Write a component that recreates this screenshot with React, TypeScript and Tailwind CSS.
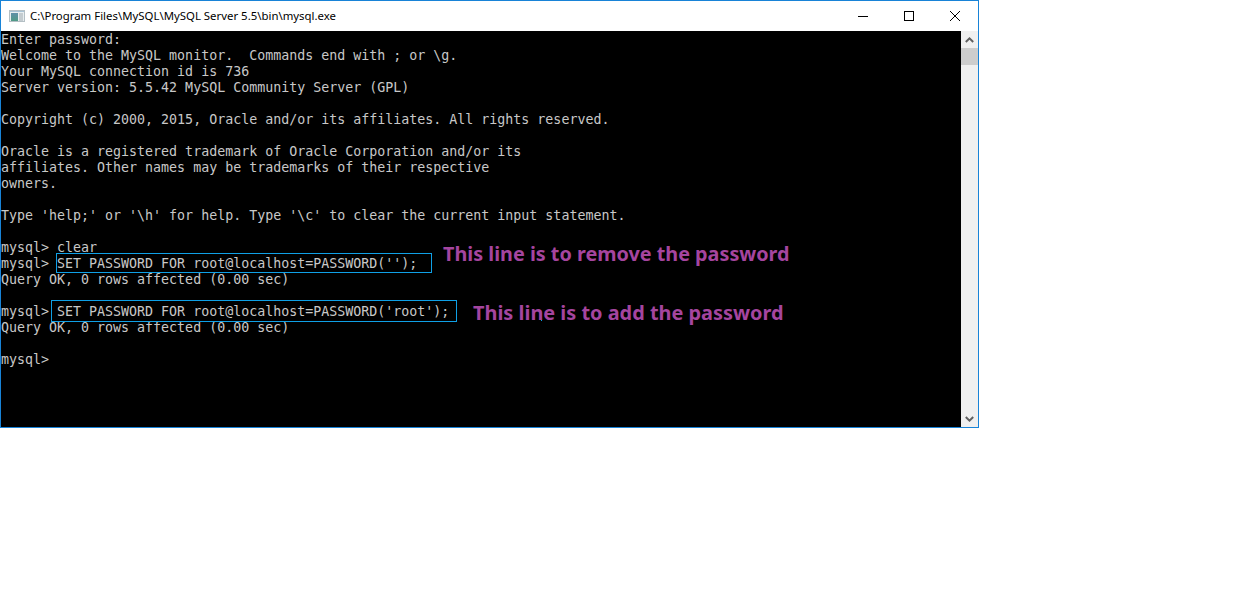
const lines = [
  'Enter password:',
  'Welcome to the MySQL monitor.  Commands end with ; or \\g.',
  'Your MySQL connection id is 736',
  'Server version: 5.5.42 MySQL Community Server (GPL)',
  '',
  'Copyright (c) 2000, 2015, Oracle and/or its affiliates. All rights reserved.',
  '',
  'Oracle is a registered trademark of Oracle Corporation and/or its',
  'affiliates. Other names may be trademarks of their respective',
  'owners.',
  '',
  "Type 'help;' or '\\h' for help. Type '\\c' to clear the current input statement.",
  '',
  'mysql> clear',
  "mysql> SET PASSWORD FOR root@localhost=PASSWORD('');",
  'Query OK, 0 rows affected (0.00 sec)',
  '',
  "mysql> SET PASSWORD FOR root@localhost=PASSWORD('root');",
  'Query OK, 0 rows affected (0.00 sec)',
  '',
  'mysql>',
];

function ConsoleIcon() {
  return (
    <svg width="16" height="12" viewBox="0 0 16 12" className="shrink-0">
      <defs>
        <linearGradient id="panel" x1="0" y1="0" x2="0" y2="1">
          <stop offset="0" stopColor="#5f8fa8" />
          <stop offset="1" stopColor="#4f9a86" />
        </linearGradient>
      </defs>
      <rect x="0.5" y="0.5" width="15" height="11" fill="#e8eef0" stroke="#b4bfc4" />
      <rect x="1" y="1" width="14" height="1" fill="#a9c3d6" />
      <rect x="2" y="3" width="7" height="8" fill="url(#panel)" />
      <rect x="10" y="3" width="4" height="8" fill="#c4ccd0" />
    </svg>
  );
}

export default function App() {
  return (
    <div className="w-[1233px] h-[604px] bg-white overflow-hidden">
      <div className="w-[979px] h-[428px] border border-[#1883d7] flex flex-col">
        {/* Title bar */}
        <div className="h-[30px] bg-white flex items-center shrink-0">
          <div className="ml-2 mr-[5px] flex items-center">
            <ConsoleIcon />
          </div>
          <span className="text-[11.4px] text-black font-['Noto_Sans',sans-serif] whitespace-nowrap">
            C:\Program Files\MySQL\MySQL Server 5.5\bin\mysql.exe
          </span>
          <div className="ml-auto flex items-center h-full">
            <div className="w-[46px] flex justify-center">
              <svg width="10" height="10" viewBox="0 0 10 10">
                <path d="M0 5.5H10" stroke="#000" strokeWidth="1" />
              </svg>
            </div>
            <div className="w-[46px] flex justify-center">
              <svg width="10" height="10" viewBox="0 0 10 10">
                <rect x="0.5" y="0.5" width="9" height="9" fill="none" stroke="#000" strokeWidth="1" />
              </svg>
            </div>
            <div className="w-[46px] flex justify-center">
              <svg width="10" height="10" viewBox="0 0 10 10">
                <path d="M0 0L10 10M10 0L0 10" stroke="#000" strokeWidth="1" />
              </svg>
            </div>
          </div>
        </div>

        {/* Console */}
        <div className="flex flex-1 min-h-0">
          <div className="relative flex-1 bg-black overflow-hidden">
            <pre className="pt-[1px] font-['DejaVu_Sans_Mono',monospace] text-[13.3px] leading-[16px] text-[#c8c8c8]">
              {lines.map((l, i) => (
                <div key={i} className="h-[16px]">{l}</div>
              ))}
            </pre>

            {/* Annotations */}
            <div className="absolute left-[55px] top-[222px] w-[376px] h-[20px] border border-[#0fa0e6]" />
            <div className="absolute left-[50px] top-[269px] w-[406px] h-[22px] border border-[#0fa0e6]" />
            <span className="absolute left-[442px] top-[208px] text-[19.8px] leading-[30px] font-bold text-[#a5459f] font-['Noto_Sans',sans-serif] whitespace-nowrap">
              This line is to remove the password
            </span>
            <span className="absolute left-[472px] top-[267px] text-[19.9px] leading-[30px] font-bold text-[#a5459f] font-['Noto_Sans',sans-serif] whitespace-nowrap">
              This line is to add the password
            </span>
            <div className="absolute left-[540px] top-[289px] w-px h-px bg-[#0fa0e6]" />
          </div>

          {/* Scrollbar */}
          <div className="w-[17px] bg-[#f0f0f0] flex flex-col shrink-0">
            <div className="h-[17px] flex items-center justify-center">
              <svg width="9" height="6" viewBox="0 0 9 6">
                <path d="M0.8 5L4.5 1.4L8.2 5" fill="none" stroke="#606060" strokeWidth="2" />
              </svg>
            </div>
            <div className="h-[17px] bg-[#cdcdcd]" />
            <div className="flex-1" />
            <div className="h-[17px] flex items-center justify-center">
              <svg width="9" height="6" viewBox="0 0 9 6">
                <path d="M0.8 1L4.5 4.6L8.2 1" fill="none" stroke="#606060" strokeWidth="2" />
              </svg>
            </div>
          </div>
        </div>
      </div>
    </div>
  );
}
